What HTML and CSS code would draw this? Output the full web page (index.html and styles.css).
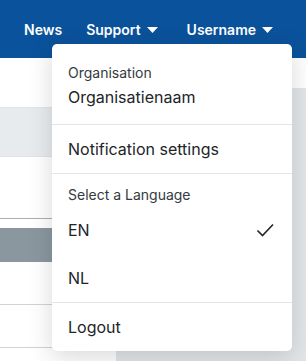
FILE: index.html
```html
<!DOCTYPE html>
<html lang="en">

<head>
    <meta charset="UTF-8" />
    <meta name="viewport" content="width=device-width, initial-scale=1.0" />
    <title>Account menu</title>

    <link rel="stylesheet" href="styles.css">
</head>

<body>
    <header class="topbar">
        <nav class="nav">
            <a class="nav-link nav-news" href="#">News</a>
            <a class="nav-link nav-support" href="#">Support
                <svg class="caret" width="11" height="6" viewBox="0 0 11 6"><path d="M0 0h11L5.5 6z" fill="#fff" /></svg>
            </a>
            <a class="nav-link nav-user" href="#">Username
                <svg class="caret" width="11" height="6" viewBox="0 0 11 6"><path d="M0 0h11L5.5 6z" fill="#fff" /></svg>
            </a>
        </nav>
    </header>

    <div class="subbar"></div>

    <main class="page">
        <aside class="sidebar">
            <div class="side-gap"></div>
            <div class="side-band"></div>
            <div class="side-row side-row-tall"></div>
            <div class="side-bar"></div>
            <div class="side-row side-row-line"></div>
            <div class="side-row side-row-line"></div>
        </aside>
        <section class="content"></section>
    </main>

    <div class="dropdown">
        <div class="menu-head">
            <div class="menu-label">Organisation</div>
            <div class="menu-org">Organisatienaam</div>
        </div>
        <a class="menu-item" href="#">Notification settings</a>
        <div class="menu-section">
            <div class="menu-label">Select a Language</div>
            <a class="menu-item menu-item-plain is-active" href="#">EN
                <svg class="check" width="20" height="16" viewBox="0 0 20 16"><path d="M2.5 8.5l5 5L18 2.5" fill="none" stroke="#212529" stroke-width="1.6" /></svg>
            </a>
            <a class="menu-item menu-item-plain" href="#">NL</a>
        </div>
        <a class="menu-item" href="#">Logout</a>
    </div>
</body>

</html>
```

FILE: styles.css
```css
* {
    margin: 0;
    padding: 0;
    box-sizing: border-box;
}

html,
body {
    height: 100%;
}

body {
    font-family: Inter, "Noto Sans", sans-serif;
    background: #e3e6e9;
    color: #212529;
    overflow: hidden;
}

a {
    color: inherit;
    text-decoration: none;
}

/**
* Top bar
*/
.topbar {
    height: 58px;
    background: #0a529b;
}

.nav {
    display: flex;
    align-items: center;
    height: 100%;
    padding-left: 24px;
    padding-top: 1px;
}

.nav-link {
    display: flex;
    align-items: center;
    gap: 6px;
    color: #fff;
    font-size: 14px;
    font-weight: 600;
    line-height: 20px;
}

.nav-support {
    margin-left: 24px;
}

.nav-user {
    margin-left: 29px;
}

.caret {
    display: block;
    margin-top: 1px;
}

/**
* Page behind the menu
*/
.subbar {
    height: 30px;
    background: #fff;
}

.page {
    display: flex;
    height: calc(100% - 88px);
}

.sidebar {
    width: 116px;
    background: #fff;
}

.side-gap {
    height: 19px;
}

.side-band {
    height: 50px;
    background: #e8ebee;
    border-top: 1px solid #e1e4e8;
    border-bottom: 1px solid #dfe2e6;
}

.side-row-tall {
    height: 62px;
    border-bottom: 1px solid #a9aeb3;
}

.side-bar {
    height: 34px;
    margin-top: 9px;
    background: #8a979f;
}

.side-row-line {
    height: 43px;
    border-bottom: 1px solid #cfd3d7;
}

.content {
    flex: 1;
}

/**
* Account dropdown
*/
.dropdown {
    position: absolute;
    left: 52px;
    top: 44px;
    width: 240px;
    background: #fff;
    border-radius: 5px;
    box-shadow: 0 6px 24px rgba(33, 37, 41, 0.18);
    padding-top: 8px;
}

.menu-head {
    padding: 11px 16px 15px;
    border-bottom: 1px solid #e3e5e8;
}

.menu-label {
    font-size: 14px;
    line-height: 20px;
    color: #343a40;
}

.menu-org {
    margin-top: 2px;
    font-size: 16px;
    line-height: 24px;
}

.menu-item {
    display: flex;
    align-items: center;
    justify-content: space-between;
    padding: 12px 16px;
    font-size: 16px;
    line-height: 24px;
}

.menu-section {
    border-top: 1px solid #e3e5e8;
    border-bottom: 1px solid #e3e5e8;
    padding-top: 11px;
}

.menu-section .menu-label {
    padding: 0 16px 1px;
}

.check {
    display: block;
    margin-right: 1px;
}
```
